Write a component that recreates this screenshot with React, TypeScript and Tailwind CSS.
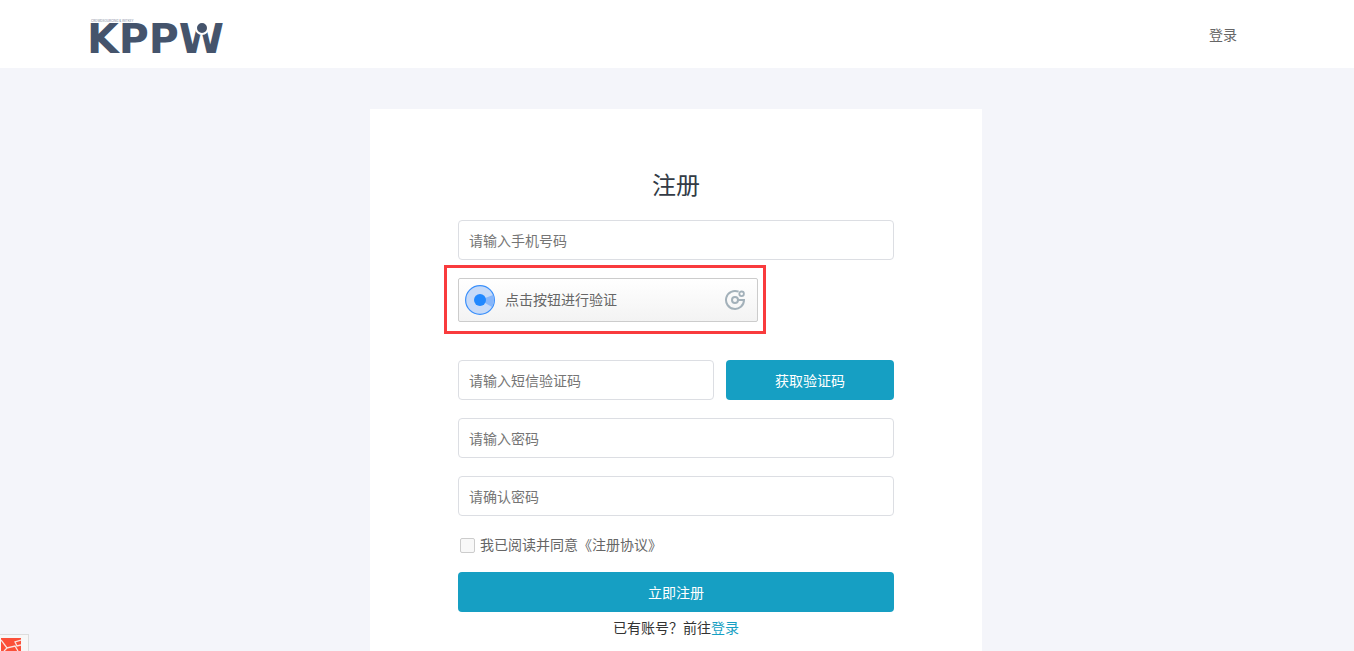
import React from 'react'

const inputClass =
  'block h-10 w-full rounded border border-[#dcdee3] bg-white px-2.5 text-sm text-[#555] placeholder:text-[#757575] outline-none focus:border-[#169fc3]'

const buttonClass = 'h-10 rounded bg-[#169fc3] text-sm text-white cursor-pointer hover:bg-[#1390b1]'

const Logo: React.FC = () => (
  <svg width="140" height="50" viewBox="-4 0 140 50" className="overflow-visible" role="img" aria-label="KPPW">
    <text x="0" y="8" fontSize="3" fill="#7d889b" fontFamily="Inter, sans-serif">
      CROWDSOURCING &amp; WITKEY
    </text>
    <text x="-4" y="39" fontSize="41" fontWeight="700" fill="#45546c" fontFamily="DejaVu Sans, sans-serif">
      KPPW
    </text>
    <circle cx="111" cy="14" r="6" fill="#45546c" stroke="#fff" strokeWidth="2" />
  </svg>
)

const RadarIcon: React.FC = () => (
  <svg width="30" height="30" viewBox="0 0 30 30" aria-hidden="true">
    <circle cx="15" cy="15" r="14.4" fill="#c6daf8" stroke="#3b90fb" strokeWidth="1.2" />
    <path d="M15 15 28 10A14 14 0 0 1 27 22Z" fill="#86b6fb" />
    <circle cx="15" cy="15" r="6" fill="#2088ff" />
  </svg>
)

const CaptchaMark: React.FC = () => (
  <svg width="22" height="22" viewBox="0 0 22 22" fill="none" stroke="#a3b1ba" aria-hidden="true">
    <path d="M14.6 2.7A9 9 0 1 0 20 11H14" strokeWidth="2" />
    <circle cx="11" cy="11" r="3" strokeWidth="2" />
    <circle cx="17.6" cy="4.8" r="2.3" strokeWidth="1.8" />
  </svg>
)

const Captcha: React.FC = () => (
  <div className="relative mb-5 w-[300px]">
    <button
      type="button"
      className="flex h-11 w-full cursor-pointer items-center rounded-xs border border-[#ccc] bg-linear-to-b from-white to-[#f3f3f3] pr-[11px] pl-1.5 text-sm text-[#666]"
    >
      <RadarIcon />
      <span className="ml-2.5 flex-1 pb-0.5 text-left">点击按钮进行验证</span>
      <CaptchaMark />
    </button>
    <div className="pointer-events-none absolute -top-[13px] -right-2 -bottom-3 -left-3.5 border-3 border-[#f93b3d]" />
  </div>
)

const App: React.FC = () => {
  return (
    <div className="flex min-h-screen flex-col bg-[#f4f5fa] font-['Noto_Sans_CJK_SC',sans-serif] text-sm text-[#333]">
      <header className="bg-white">
        <div className="mx-auto flex h-[68px] max-w-[1172px] items-center justify-between pr-[26px]">
          <a href="#" className="mt-2.5 -ml-1">
            <Logo />
          </a>
          <a href="#" className="text-[#666]">
            登录
          </a>
        </div>
      </header>

      <main className="flex flex-1 flex-col items-center pt-[41px] pr-0.5">
        <div className="w-full max-w-[612px] flex-1 bg-white px-[88px] pt-[59px]">
          <h1 className="text-center text-2xl text-[#333b45]">注册</h1>

          <form className="mt-5 flex flex-col gap-[18px]" onSubmit={(e) => e.preventDefault()}>
            <input type="tel" aria-label="手机号码" placeholder="请输入手机号码" className={inputClass} />
            <Captcha />
            <div className="flex gap-3">
              <input type="text" aria-label="短信验证码" placeholder="请输入短信验证码" className={inputClass} />
              <button type="button" className={`${buttonClass} w-[168px] shrink-0`}>
                获取验证码
              </button>
            </div>
            <input type="password" aria-label="密码" placeholder="请输入密码" className={inputClass} />
            <input type="password" aria-label="确认密码" placeholder="请确认密码" className={inputClass} />

            <div>
              <label className="flex h-5 items-center gap-[5px] pl-0.5 text-[#666]">
                <input
                  type="checkbox"
                  className="mt-0.5 size-[15px] appearance-none rounded-xs border border-[#ccc] bg-[#f8f8f8] checked:bg-[#169fc3]"
                />
                我已阅读并同意《注册协议》
              </label>
            </div>
            <button type="submit" className={buttonClass}>
              立即注册
            </button>
          </form>

          <p className="mt-[5px] text-center">
            已有账号？前往
            <a href="#" className="text-[#169fc3]">
              登录
            </a>
          </p>
        </div>
      </main>

      <div className="fixed bottom-0 left-0 flex h-[17px] w-[29px] overflow-hidden border-t border-r border-[#ddd] bg-[#f7f7f7] pt-[3px] pl-px">
        <svg width="20" height="13" viewBox="0 0 20 13" aria-hidden="true">
          <path d="M0 0H20V13H0Z" fill="#fb4f38" />
          <path d="M0 2 6 10 14 8 17 13M6 10 3 13M20 2 14 4 16 8 20 7" fill="none" stroke="#fbe3df" strokeWidth="1.3" />
        </svg>
      </div>
    </div>
  )
}

export default App
